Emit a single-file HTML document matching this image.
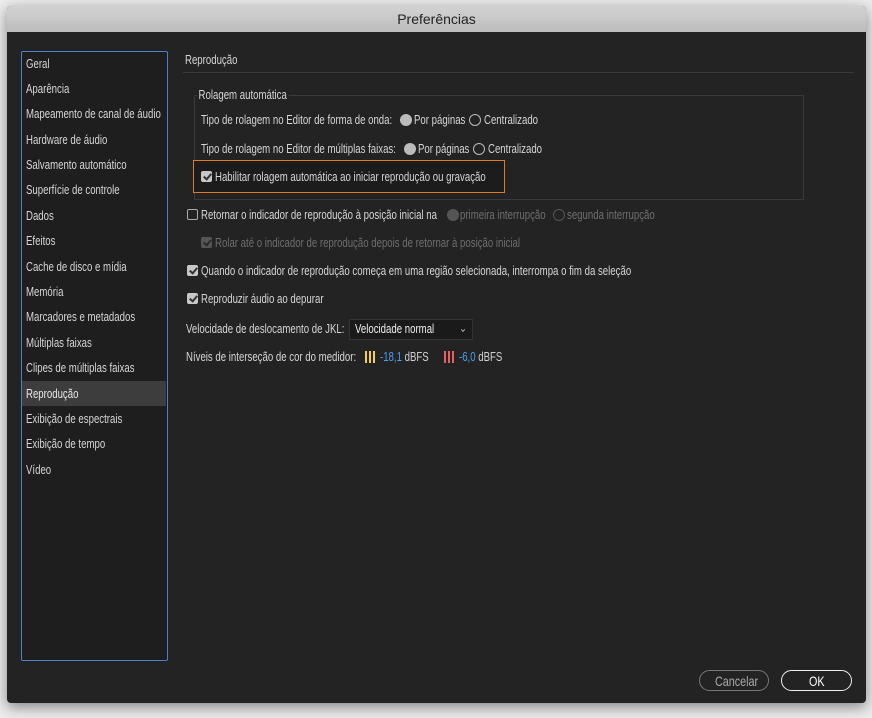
<!DOCTYPE html>
<html><head><meta charset="utf-8"><style>
body{margin:0;width:872px;height:718px;background:#ececec;overflow:hidden;font-family:"Liberation Sans",sans-serif;position:relative}
.win{position:absolute;left:7px;top:6px;width:859px;height:697px;background:#232323;border-radius:4px;box-shadow:0 4px 14px rgba(0,0,0,.45);overflow:hidden}
.title{position:absolute;left:0;top:0;width:100%;height:26px;background:linear-gradient(#d2d2d2,#bdbdbd);color:#222;text-align:center;line-height:27px;font-size:14px}
.t{position:absolute;white-space:nowrap;font-size:12.5px;color:#d6d6d6;transform:scaleX(.77);transform-origin:0 50%;line-height:16px}
.d{color:#6e6e6e}
.side{position:absolute;left:14px;top:45px;width:145px;height:608px;border:1px solid #4e7fc9;border-radius:2px;background:#1e1e1e}
.sel{position:absolute;left:15px;top:375px;width:144px;height:25px;background:#3d3d3d}
.cb{position:absolute;width:11px;height:11px;border:1px solid #aaa;border-radius:2px;box-sizing:border-box}
.cb.on{background:#c8c8c8;border-color:#c8c8c8}
.cb.on::after{content:"";position:absolute;left:3px;top:0px;width:3px;height:6px;border:solid #333;border-width:0 2px 2px 0;transform:rotate(40deg)}
.cb.dis{background:#555;border-color:#555}
.cb.dis::after{border-color:#2a2a2a}
.rd{position:absolute;width:12px;height:12px;border-radius:50%;box-sizing:border-box}
.btn{position:absolute;height:21px;border-radius:11px;box-sizing:border-box}
</style></head><body>
<div class="win">
<div class="title">Preferências</div>
<div class="side"></div>
<div class="sel"></div>
<div class="t" style="left:19px;top:50px">Geral</div>
<div class="t" style="left:19px;top:75px">Aparência</div>
<div class="t" style="left:19px;top:100px">Mapeamento de canal de áudio</div>
<div class="t" style="left:19px;top:126px">Hardware de áudio</div>
<div class="t" style="left:19px;top:151px">Salvamento automático</div>
<div class="t" style="left:19px;top:176px">Superfície de controle</div>
<div class="t" style="left:19px;top:202px">Dados</div>
<div class="t" style="left:19px;top:227px">Efeitos</div>
<div class="t" style="left:19px;top:253px">Cache de disco e mídia</div>
<div class="t" style="left:19px;top:278px">Memória</div>
<div class="t" style="left:19px;top:303px">Marcadores e metadados</div>
<div class="t" style="left:19px;top:329px">Múltiplas faixas</div>
<div class="t" style="left:19px;top:354px">Clipes de múltiplas faixas</div>
<div class="t" style="left:19px;top:380px;color:#e8e8e8">Reprodução</div>
<div class="t" style="left:19px;top:405px">Exibição de espectrais</div>
<div class="t" style="left:19px;top:430px">Exibição de tempo</div>
<div class="t" style="left:19px;top:456px">Vídeo</div>

<div class="t" style="left:178px;top:46px">Reprodução</div>
<div style="position:absolute;left:176px;top:66px;width:670px;height:1px;background:#3a3a3a"></div>
<div style="position:absolute;left:187px;top:89px;width:608px;height:103px;border:1px solid #3a3a3a"></div>
<div class="t" style="left:190px;top:81px;background:#232323;padding:0 2px">Rolagem automática</div>
<div class="t" style="left:194px;top:106px">Tipo de rolagem no Editor de forma de onda:</div>
<div class="rd" style="left:393px;top:108px;background:#bbb"></div>
<div class="t" style="left:407px;top:106px">Por páginas</div>
<div class="rd" style="left:462px;top:108px;border:1.5px solid #bbb"></div>
<div class="t" style="left:477px;top:106px">Centralizado</div>
<div class="t" style="left:194px;top:135px">Tipo de rolagem no Editor de múltiplas faixas:</div>
<div class="rd" style="left:397px;top:137px;background:#bbb"></div>
<div class="rd" style="left:466px;top:137px;border:1.5px solid #bbb"></div>
<div class="t" style="left:411px;top:135px">Por páginas</div>
<div class="t" style="left:481px;top:135px">Centralizado</div>
<div style="position:absolute;left:186px;top:154px;width:312px;height:33px;border:1.5px solid #e07b20;box-sizing:border-box;background:#1c1c1c"></div>
<div class="cb on" style="left:194px;top:165px"></div>
<div class="t" style="left:208px;top:163px">Habilitar rolagem automática ao iniciar reprodução ou gravação</div>

<div class="cb" style="left:180px;top:203px"></div>
<div class="t" style="left:194px;top:201px">Retornar o indicador de reprodução à posição inicial na</div>
<div class="rd" style="left:440px;top:203px;background:#555"></div>
<div class="t d" style="left:453px;top:201px">primeira interrupção</div>
<div class="rd" style="left:546px;top:203px;border:1.5px solid #555"></div>
<div class="t d" style="left:560px;top:201px">segunda interrupção</div>
<div class="cb on dis" style="left:194px;top:231px"></div>
<div class="t d" style="left:208px;top:229px">Rolar até o indicador de reprodução depois de retornar à posição inicial</div>
<div class="cb on" style="left:180px;top:259px"></div>
<div class="t" style="left:194px;top:257px">Quando o indicador de reprodução começa em uma região selecionada, interrompa o fim da seleção</div>
<div class="cb on" style="left:180px;top:287px"></div>
<div class="t" style="left:194px;top:285px">Reproduzir áudio ao depurar</div>

<div class="t" style="left:179px;top:315px">Velocidade de deslocamento de JKL:</div>
<div style="position:absolute;left:342px;top:313px;width:124px;height:21px;background:#1a1a1a;border:1px solid #333;box-sizing:border-box"></div>
<div class="t" style="left:348px;top:315px;color:#eee">Velocidade normal</div>
<div class="t" style="left:452px;top:314px;color:#aaa">⌄</div>
<div class="t" style="left:179px;top:343px">Níveis de interseção de cor do medidor:</div>
<div style="position:absolute;left:358px;top:345px;width:10px;height:12px;background:repeating-linear-gradient(90deg,#f2d04a 0 2px,#232323 2px 4px)"></div>
<div class="t" style="left:373px;top:343px;color:#4aa0f0">-18,1 <span style="color:#d0d0d0">dBFS</span></div>
<div style="position:absolute;left:437px;top:345px;width:10px;height:12px;background:repeating-linear-gradient(90deg,#e86060 0 2px,#232323 2px 4px)"></div>
<div class="t" style="left:452px;top:343px;color:#4aa0f0">-6,0 <span style="color:#d0d0d0">dBFS</span></div>

<div class="btn" style="left:692px;top:664px;width:70px;border:1.5px solid #777"></div>
<div class="t" style="left:708px;top:667px;color:#aaa;font-size:14px">Cancelar</div>
<div class="btn" style="left:774px;top:664px;width:71px;border:1.5px solid #eee"></div>
<div class="t" style="left:802px;top:667px;color:#fff;font-size:14px">OK</div>
</div>
</body></html>
